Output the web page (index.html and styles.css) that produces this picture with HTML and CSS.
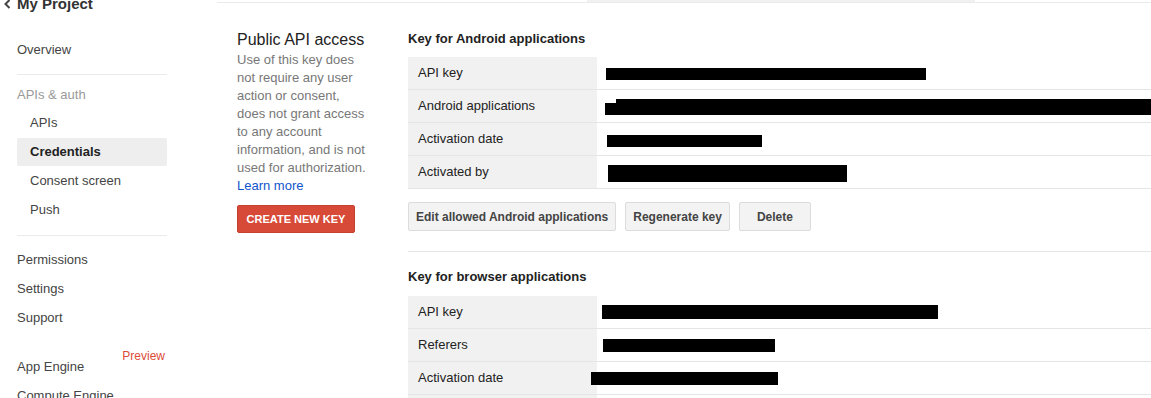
FILE: index.html
```html
<!doctype html>
<html lang="en">
<head>
	<meta charset="UTF-8">
	<title>Credentials - My Project</title>
	<link rel="stylesheet" href="styles.css">
</head>
<body>
	<div class="page">
		<nav class="sidebar">
			<div class="project">
				<svg class="back" width="7" height="10" viewBox="0 0 7 10"><polyline points="5.5,1 1.5,5 5.5,9" fill="none" stroke="#444" stroke-width="2"/></svg>
				My Project
			</div>
			<a class="nav-item">Overview</a>
			<div class="nav-rule first"></div>
			<div class="nav-group">APIs &amp; auth</div>
			<a class="nav-item sub">APIs</a>
			<a class="nav-item sub active">Credentials</a>
			<a class="nav-item sub">Consent screen</a>
			<a class="nav-item sub">Push</a>
			<div class="nav-rule"></div>
			<a class="nav-item">Permissions</a>
			<a class="nav-item">Settings</a>
			<a class="nav-item">Support</a>
			<a class="nav-item product">App Engine <span class="preview">Preview</span></a>
			<a class="nav-item">Compute Engine</a>
		</nav>

		<main class="main">
			<div class="top-strip"><div class="scroll-shade"></div></div>
			<div class="content">
				<section class="intro">
					<h2>Public API access</h2>
					<p>Use of this key does not require any user action or consent, does not grant access to any account information, and is not used for authorization.</p>
					<a class="learn">Learn more</a>
					<button class="btn-red">CREATE NEW KEY</button>
				</section>

				<section class="keys">
					<div class="key-block">
						<h3>Key for Android applications</h3>
						<div class="key-table">
							<div class="row"><div class="label">API key</div><div class="value"><span class="redact a1"></span></div></div>
							<div class="row"><div class="label">Android applications</div><div class="value"><span class="redact a2"></span></div></div>
							<div class="row"><div class="label">Activation date</div><div class="value"><span class="redact a3"></span></div></div>
							<div class="row"><div class="label">Activated by</div><div class="value"><span class="redact a4"></span></div></div>
						</div>
						<div class="actions">
							<button class="btn">Edit allowed Android applications</button>
							<button class="btn">Regenerate key</button>
							<button class="btn">Delete</button>
						</div>
					</div>

					<div class="key-block second">
						<h3>Key for browser applications</h3>
						<div class="key-table">
							<div class="row"><div class="label">API key</div><div class="value"><span class="redact b1"></span></div></div>
							<div class="row"><div class="label">Referers</div><div class="value"><span class="redact b2"></span></div></div>
							<div class="row"><div class="label">Activation date</div><div class="value"><span class="redact b3"></span></div></div>
							<div class="row"><div class="label">Activated by</div><div class="value"></div></div>
						</div>
					</div>
				</section>
			</div>
		</main>
	</div>
</body>
</html>
```

FILE: styles.css
```css
* {
	margin: 0;
	padding: 0;
	box-sizing: border-box;
}
html, body {
	height: 100%;
	overflow: hidden;
}
body {
	font-family: "Liberation Sans", Arial, sans-serif;
	font-size: 13px;
	color: #222;
	background: #fff;
}
.page {
	display: flex;
	align-items: flex-start;
}

/* sidebar */
.sidebar {
	flex: 0 0 217px;
	padding: 0 50px 0 17px;
	display: flex;
	flex-direction: column;
}
.project {
	position: relative;
	height: 20px;
	line-height: 20px;
	margin-top: -6px;
	margin-bottom: 22px;
	font-size: 15px;
	font-weight: bold;
	color: #333;
}
.project .back {
	position: absolute;
	left: -13px;
	top: 5px;
}
.nav-item {
	display: block;
	height: 28px;
	line-height: 28px;
	margin-bottom: 1px;
	color: #444;
	border-radius: 2px;
}
.nav-item.sub {
	padding-left: 13px;
}
.nav-item.active {
	background: #eee;
	font-weight: bold;
	color: #222;
}
.nav-group {
	height: 28px;
	line-height: 28px;
	color: #999;
}
.nav-rule {
	height: 1px;
	background: #ebebeb;
	margin: 10px 0;
}
.nav-rule.first {
	margin: 9px 0 6px;
}
.nav-item.product {
	display: flex;
	justify-content: space-between;
	margin-top: 20px;
}
.preview {
	font-size: 12px;
	color: #dd4b39;
	margin-top: -11px;
	margin-right: 2px;
}

/* main */
.main {
	flex: 1;
	min-width: 0;
	overflow: hidden;
}
.top-strip {
	height: 3px;
	border-bottom: 1px solid #ebebeb;
}
.scroll-shade {
	margin-left: 370px;
	width: 388px;
	height: 2px;
	background: #f1f1f1;
}
.content {
	display: flex;
	padding: 27px 0 0 20px;
}
.intro {
	flex: 0 0 132px;
	margin-right: 39px;
}
.intro h2 {
	font-size: 16px;
	font-weight: normal;
	line-height: 20px;
	color: #222;
	margin-bottom: 1px;
	white-space: nowrap;
}
.intro p {
	line-height: 18px;
	color: #777;
}
.learn {
	display: block;
	line-height: 18px;
	color: #15c;
}
.btn-red {
	margin-top: 10px;
	height: 28px;
	width: 118px;
	border: 1px solid #c6412f;
	border-radius: 2px;
	background: #d84a38;
	color: #fff;
	font-family: inherit;
	font-size: 11px;
	font-weight: bold;
}

.keys {
	flex: 1;
	min-width: 0;
}
.key-block h3 {
	font-size: 13px;
	font-weight: bold;
	line-height: 18px;
	color: #222;
	margin-bottom: 9px;
}
.key-table {
	width: 760px;
}
.row {
	display: flex;
	height: 33px;
	border-bottom: 1px solid #e5e5e5;
}
.label {
	flex: 0 0 189px;
	padding-left: 10px;
	line-height: 32px;
	background: #f1f1f1;
}
.value {
	flex: 1;
	display: flex;
	align-items: center;
}
.redact {
	display: block;
	background: #000;
	height: 13px;
}
.a1 { width: 320px; margin: 2px 0 0 9px; height: 12px; }
.a2 {
	width: 560px;
	height: 16px;
	margin: 2px 0 0 8px;
	clip-path: polygon(11px 0, 100% 0, 100% 100%, 0 100%, 0 4px, 11px 4px);
}
.a3 { width: 155px; height: 12px; margin: 4px 0 0 10px; }
.a4 { width: 239px; height: 17px; margin: 2px 0 0 11px; }
.b1 { width: 336px; height: 14px; margin: 0 0 0 5px; }
.b2 { width: 172px; margin: 0 0 0 6px; }
.b3 { width: 187px; margin: 1px 0 0 -6px; }

.actions {
	display: flex;
	gap: 9px;
	margin-top: 13px;
	padding-bottom: 20px;
	border-bottom: 1px solid #e5e5e5;
}
.btn {
	height: 29px;
	min-width: 72px;
	padding: 0 7px;
	border: 1px solid #dcdcdc;
	border-radius: 2px;
	background: #f3f3f3;
	color: #444;
	font-family: inherit;
	font-size: 12px;
	font-weight: bold;
}
.key-block.second {
	margin-top: 16px;
}
.key-block.second h3 {
	margin-bottom: 10px;
}
```
